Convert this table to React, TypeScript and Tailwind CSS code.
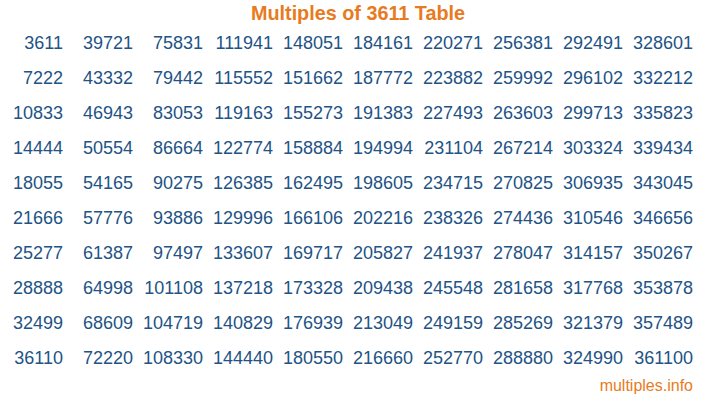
import React from "react";

const BASE = 3611;

export default function App() {
  const rows = Array.from({ length: 10 }, (_, r) => r + 1);
  const cols = Array.from({ length: 10 }, (_, c) => c);

  return (
    <div className="w-[716px] h-[400px] bg-white overflow-hidden font-['Liberation_Sans',Arial,sans-serif]">
      <h1 className="h-[26px] text-center text-[19.8px] leading-[26px] font-bold text-[#e77b22]">
        Multiples of {BASE} Table
      </h1>
      <div className="w-[700px] grid grid-cols-10 text-[18px] leading-[35px] text-[#225385]">
        {rows.map((r) =>
          cols.map((c) => (
            <div key={`${r}-${c}`} className="text-right pr-[7px]">
              {BASE * (c * 10 + r)}
            </div>
          )),
        )}
      </div>
      <div className="w-[700px] text-right pr-[7px] text-[16px] leading-[18px] mt-[1px] text-[#e77b22]">
        multiples.info
      </div>
    </div>
  );
}
